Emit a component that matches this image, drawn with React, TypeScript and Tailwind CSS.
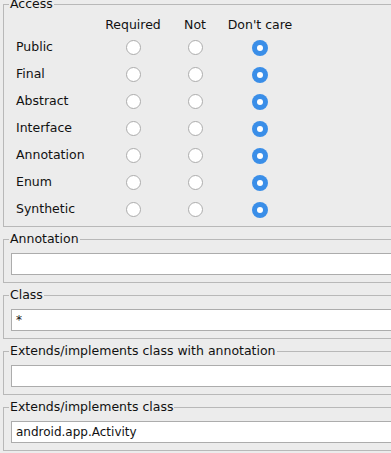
import React from "react";

const rows = ["Public", "Final", "Abstract", "Interface", "Annotation", "Enum", "Synthetic"];

function Radio({ on }: { on?: boolean }) {
  if (on) {
    return (
      <div className="w-4 h-4 rounded-full bg-[#3a8ee8] flex items-center justify-center">
        <div className="w-[6px] h-[6px] rounded-full bg-white" />
      </div>
    );
  }
  return <div className="w-[15px] h-[15px] rounded-full bg-white border border-[#acacac]" />;
}

function Group({ title, value }: { title: string; value?: string }) {
  return (
    <fieldset className="mt-[4px] ml-[3px] w-[430px] border border-[#b8b8b8] p-0 min-w-0">
      <legend className="ml-[5px] px-[1px] leading-[16px] h-[16px]">{title}</legend>
      <div className="pl-[7px] pt-[6px] pb-[7px]">
        <div className="h-[22px] bg-white border border-[#acacac] flex items-center pl-[4px] text-[12px] text-[#111]">
          {value}
        </div>
      </div>
    </fieldset>
  );
}

export default function App() {
  return (
    <div
      className="w-[391px] h-[453px] bg-[#ececec] overflow-hidden text-[12.5px] text-[#111]"
      style={{ fontFamily: '"DejaVu Sans", "Liberation Sans", sans-serif' }}
    >
      <fieldset className="-mt-[4px] ml-[3px] w-[430px] border border-[#b8b8b8] p-0 min-w-0">
        <legend className="ml-[5px] px-[1px] leading-[16px] h-[16px]">Access</legend>
        <div className="pl-[12px] pt-[4px] pb-[3px] grid grid-cols-[86px_62px_62px_68px]">
          <div className="h-[18px]" />
          <div className="h-[18px] flex items-center justify-center">Required</div>
          <div className="h-[18px] flex items-center justify-center">Not</div>
          <div className="h-[18px] flex items-center justify-center">Don't care</div>
          {rows.map((r) => (
            <React.Fragment key={r}>
              <div className="h-[27px] flex items-center">{r}</div>
              <div className="h-[27px] flex items-center justify-center">
                <Radio />
              </div>
              <div className="h-[27px] flex items-center justify-center">
                <Radio />
              </div>
              <div className="h-[27px] flex items-center justify-center">
                <Radio on />
              </div>
            </React.Fragment>
          ))}
        </div>
      </fieldset>
      <Group title="Annotation" />
      <Group title="Class" value="*" />
      <Group title="Extends/implements class with annotation" />
      <Group title="Extends/implements class" value="android.app.Activity" />
    </div>
  );
}
